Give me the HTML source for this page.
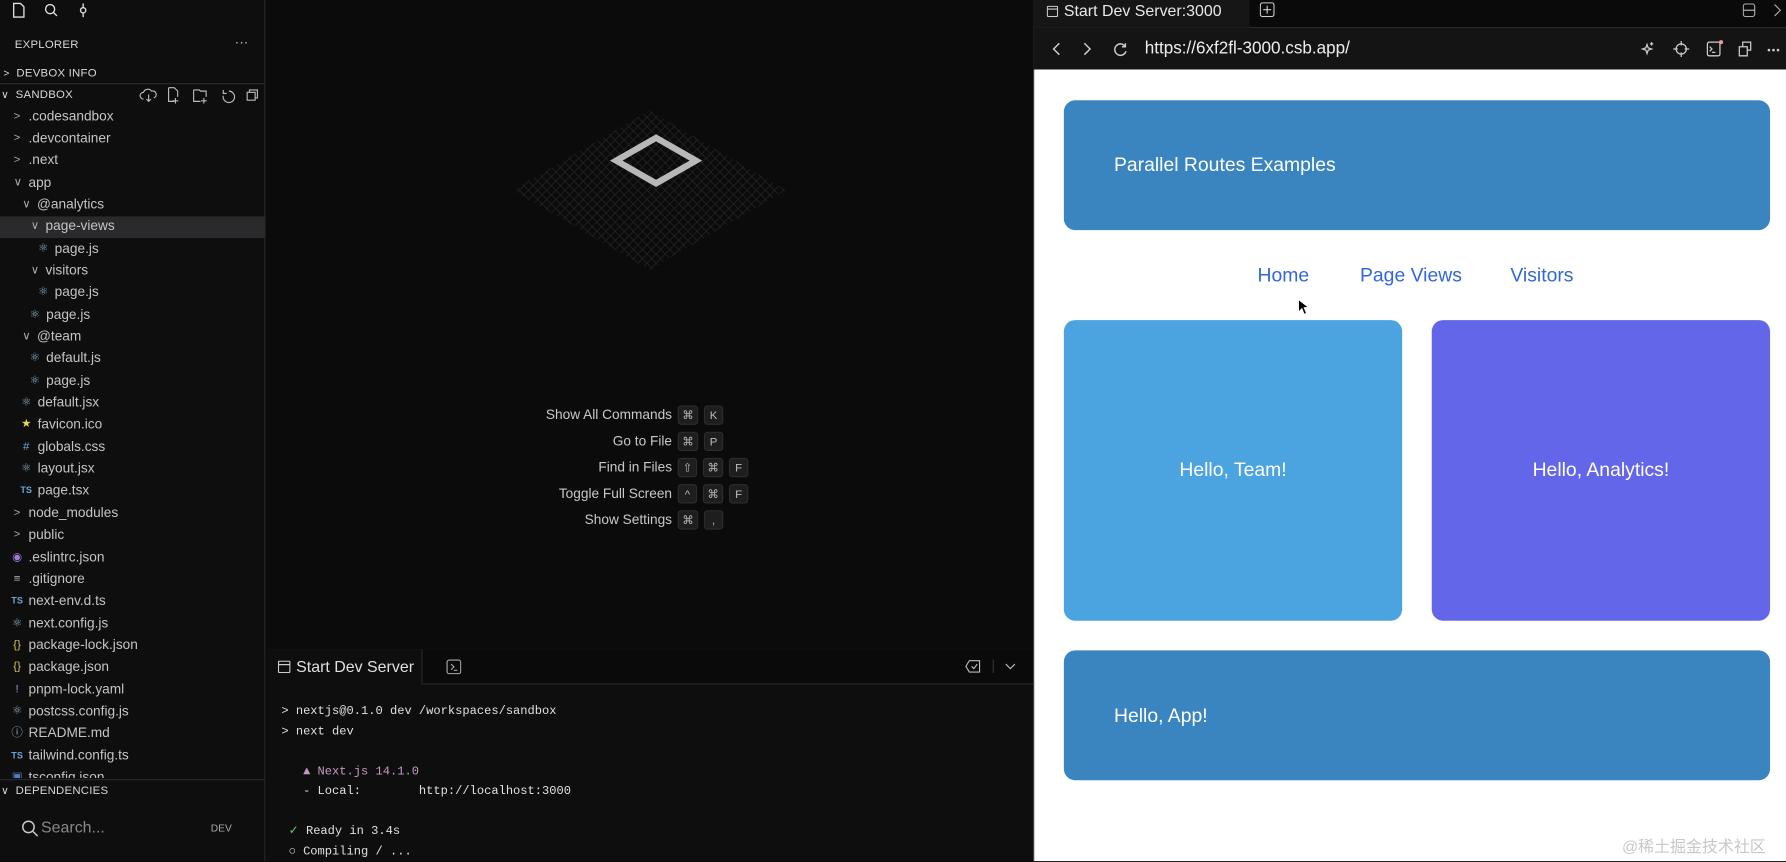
<!DOCTYPE html>
<html><head><meta charset="utf-8"><style>
*{margin:0;padding:0;box-sizing:border-box}
html,body{width:1786px;height:861px;overflow:hidden;background:#0b0b0b}
#w{position:absolute;left:0;top:0;width:1568px;height:756px;transform:scale(1.13903);transform-origin:0 0;font-family:"Liberation Sans",sans-serif;color:#cfcfcf;background:#0b0b0b}
.a{position:absolute}
.side{left:0;top:0;width:233px;height:756px;background:#0e0e0e;border-right:1px solid #262626}
.row{position:absolute;left:0;width:233px;height:19.35px;font-size:12px;line-height:19px;color:#c4c4c4;white-space:nowrap}
.row .ch{position:absolute;top:0;font-size:10px;color:#aaa}
.row .ic{position:absolute;top:0;font-size:10px;width:12px;text-align:center}
.hd{font-size:10px;color:#d8d8d8;letter-spacing:.2px}
.kbd{display:inline-block;min-width:17px;height:17px;line-height:17px;font-size:10px;text-align:center;background:#1e1e1e;border:1px solid #2c2c2c;border-radius:3px;color:#bbb;margin-left:5px;padding:0 3px}
.cmd{position:absolute;left:400px;width:300px;height:20px;font-size:12px;color:#c8c8c8;line-height:18px}
.cmd span.l{display:inline-block;width:190px;text-align:right}
.mono{font-family:"Liberation Mono",monospace;font-size:10.6px;color:#e0e0e0}
svg{display:block}
</style></head><body><div id="w">

<div class="a side">
 <svg class="a" style="left:10px;top:2px" width="74" height="14" viewBox="0 0 74 14" fill="none" stroke="#ddd" stroke-width="1.2">
  <path d="M2 1h6l3 3v9H2z"/>
  <circle cx="34" cy="6" r="4"/><path d="M37 9l3 3"/>
  <circle cx="63" cy="7" r="2.3"/><path d="M63 1v3.7M63 9.3V13"/>
 </svg>
 <div class="a hd" style="left:13px;top:34px">EXPLORER</div>
 <div class="a" style="left:206px;top:30px;color:#bbb;font-size:12px">···</div>
 <div class="a hd" style="left:3px;top:59px"><span style="font-size:9px">&gt;</span>&nbsp; DEVBOX INFO</div>
 <div class="a" style="left:0;top:73px;width:233px;border-top:1px solid #2a2a2a"></div>
 <div class="a hd" style="left:1px;top:78px"><span style="font-size:9px">∨</span>&nbsp; SANDBOX</div>
 <svg class="a" style="left:122px;top:76px" width="106" height="15" viewBox="0 0 106 15" fill="none" stroke="#bbb" stroke-width="1">
  <path d="M4 11a3 3 0 010-6 4 4 0 017-1 3 3 0 012 6M8.5 7v6M6.5 11l2 2 2-2"/>
  <path d="M26 1h5l3 3v5M26 1v12h5M32 10v5M29.5 12.5h5"/>
  <path d="M48 3h5l1 1h5v5M48 3v10h6M57 10v5M54.5 12.5h5"/>
  <path d="M79 4a5 5 0 11-5 4M74 3v3h3"/>
  <path d="M95 5h7v7h-7zM97 5V3h7v7h-2"/>
 </svg>
 <div class="a" style="left:0;top:190px;width:233px;height:19px;background:#2a2a2c"></div>
 <div id="tree"></div>
 <div class="a" style="left:0;top:684px;width:233px;border-top:1px solid #2a2a2a"></div>
 <div class="a hd" style="left:1px;top:689px"><span style="font-size:9px">∨</span>&nbsp; DEPENDENCIES</div>
 <svg class="a" style="left:18px;top:719px" width="16" height="16" viewBox="0 0 16 16" fill="none" stroke="#ccc" stroke-width="1.3"><circle cx="7" cy="7" r="5"/><path d="M11 11l4 4"/></svg>
 <div class="a" style="left:36px;top:718px;font-size:14px;color:#888">Search...</div>
 <div class="a" style="left:185px;top:722px;font-size:9px;color:#aaa">DEV</div>
</div>

<svg class="a" style="left:448px;top:95px" width="244" height="144" viewBox="0 0 244 144">
 <defs><pattern id="g" width="8" height="8" patternUnits="userSpaceOnUse"><path d="M0 0L8 8M8 0L0 8" stroke="#262626" stroke-width=".6"/></pattern>
 <clipPath id="c"><path d="M122 2L242 72 122 142 2 72z"/></clipPath></defs>
 <rect width="244" height="144" fill="url(#g)" clip-path="url(#c)"/>
 <path d="M128 26L163 46 128 66 93 46z" fill="none" stroke="#b8b8b8" stroke-width="5.5"/>
</svg>
<div class="cmd" style="top:355px"><span class="l">Show All Commands</span><span class="kbd">⌘</span><span class="kbd">K</span></div>
<div class="cmd" style="top:378px"><span class="l">Go to File</span><span class="kbd">⌘</span><span class="kbd">P</span></div>
<div class="cmd" style="top:401px"><span class="l">Find in Files</span><span class="kbd">⇧</span><span class="kbd">⌘</span><span class="kbd">F</span></div>
<div class="cmd" style="top:424px"><span class="l">Toggle Full Screen</span><span class="kbd">^</span><span class="kbd">⌘</span><span class="kbd">F</span></div>
<div class="cmd" style="top:447px"><span class="l">Show Settings</span><span class="kbd">⌘</span><span class="kbd">,</span></div>

<div class="a" style="left:234px;top:570px;width:673px;height:186px;background:#0e0e0e;border-top:1px solid #2a2a2a"></div>
<div class="a" style="left:234px;top:570px;width:137px;height:31px;border-right:1px solid #2a2a2a;background:#0e0e0e"></div>
<div class="a" style="left:371px;top:570px;width:536px;height:31px;background:#0a0a0a;border-bottom:1px solid #2a2a2a"></div>
<svg class="a" style="left:244px;top:580px" width="11" height="11" viewBox="0 0 11 11" fill="none" stroke="#ccc"><rect x=".5" y=".5" width="10" height="10" rx="1"/><path d="M.5 3.5h10"/></svg>
<div class="a" style="left:260px;top:577px;font-size:14px;color:#e0e0e0">Start Dev Server</div>
<svg class="a" style="left:392px;top:579px" width="13" height="13" viewBox="0 0 13 13" fill="none" stroke="#aaa"><rect x=".5" y=".5" width="12" height="12" rx="2"/><path d="M4 4l2.5 2.5L4 9M6.5 9.5h3"/></svg>
<svg class="a" style="left:847px;top:578px" width="50" height="14" viewBox="0 0 50 14" fill="none" stroke="#bbb"><path d="M4 2h9v10H4L1 7z"/><path d="M6 7l2 2 3-4"/><path d="M25 1v12" stroke="#333"/><path d="M36 5l4 4 4-4"/></svg>
<div class="a mono" style="left:247px;top:617px;line-height:17.5px;white-space:pre">&gt; nextjs@0.1.0 dev /workspaces/sandbox
&gt; next dev

   <span style="color:#c59ac2">▲ Next.js 14.1.0</span>
   - Local:        http://localhost:3000

 <span style="color:#6cc77a">✓</span> Ready in 3.4s
 ○ Compiling / ...</div>

<div class="a" style="left:907px;top:0;width:661px;height:756px;background:#fff;border-left:1px solid #333"></div>
<div class="a" style="left:907px;top:0;width:661px;height:24px;background:#0a0a0a"></div>
<div class="a" style="left:907px;top:0;width:190px;height:24px;background:#161616"></div>
<svg class="a" style="left:919px;top:5px" width="10" height="10" viewBox="0 0 10 10" fill="none" stroke="#ccc"><rect x=".5" y=".5" width="9" height="9" rx="1"/><path d="M.5 3h9"/></svg>
<div class="a" style="left:934px;top:1px;font-size:14px;color:#e8e8e8">Start Dev Server:3000</div>
<svg class="a" style="left:1106px;top:2px" width="13" height="13" viewBox="0 0 13 13" fill="none" stroke="#ccc"><rect x=".5" y=".5" width="12" height="12" rx="2"/><path d="M6.5 3v7M3 6.5h7"/></svg>
<svg class="a" style="left:1530px;top:3px" width="38" height="12" viewBox="0 0 38 12" fill="none" stroke="#aaa"><rect x=".5" y=".5" width="10" height="11" rx="2"/><path d="M.5 6h10M28 1l5 5-5 5"/></svg>
<div class="a" style="left:907px;top:24px;width:661px;height:37px;background:#141414"></div>
<svg class="a" style="left:922px;top:35px" width="70" height="16" viewBox="0 0 70 16" fill="none" stroke="#ccc" stroke-width="1.3"><path d="M8 3L3 8l5 5M30 3l5 5-5 5"/><path d="M66 6a5 5 0 10.5 4M66 3v3h-3"/></svg>
<div class="a" style="left:1005px;top:34px;font-size:15px;color:#eee">https://6xf2fl-3000.csb.app/</div>
<svg class="a" style="left:1440px;top:35px" width="128" height="16" viewBox="0 0 128 16" fill="none" stroke="#ccc" stroke-width="1.1">
 <path d="M6 4l1 3 3 1-3 1-1 3-1-3-3-1 3-1zM10 2v3M8.5 3.5h3"/>
 <circle cx="36" cy="8" r="4.5"/><path d="M36 1v4M36 11v4M29 8h4M39 8h4"/>
 <rect x="59" y="2" width="11" height="12" rx="1.5"/><path d="M61 6l2 2-2 2M63 11h3"/><circle cx="71" cy="2" r="1.8" fill="#e99" stroke="none"/>
 <path d="M87 6h7v8h-7zM90 6V2h7v7h-3"/>
 <circle cx="113" cy="9" r=".6" fill="#ccc"/><circle cx="117" cy="9" r=".6" fill="#ccc"/><circle cx="121" cy="9" r=".6" fill="#ccc"/>
</svg>

<div class="a" style="left:934px;top:88px;width:620px;height:114px;background:#3a85c0;border-radius:10px"></div>
<div class="a" style="left:978px;top:135px;font-size:17px;color:#fff">Parallel Routes Examples</div>
<div class="a" style="left:1104px;top:232px;font-size:17px;color:#3367d6">Home</div>
<div class="a" style="left:1194px;top:232px;font-size:17px;color:#3367d6">Page Views</div>
<div class="a" style="left:1326px;top:232px;font-size:17px;color:#3367d6">Visitors</div>
<svg class="a" style="left:1139px;top:262px" width="10" height="15" viewBox="0 0 10 15"><path d="M1 1v11l3-3 2 5 2-1-2-5h4z" fill="#000" stroke="#fff" stroke-width=".8"/></svg>
<div class="a" style="left:934px;top:281px;width:297px;height:264px;background:#4ba3e0;border-radius:10px"></div>
<div class="a" style="left:934px;top:403px;width:297px;text-align:center;font-size:17px;color:#fff">Hello, Team!</div>
<div class="a" style="left:1257px;top:281px;width:297px;height:264px;background:#6366e8;border-radius:10px"></div>
<div class="a" style="left:1257px;top:403px;width:297px;text-align:center;font-size:17px;color:#fff">Hello, Analytics!</div>
<div class="a" style="left:934px;top:571px;width:620px;height:114px;background:#3a85c0;border-radius:10px"></div>
<div class="a" style="left:978px;top:619px;font-size:17px;color:#fff">Hello, App!</div>
<div class="a" style="left:1424px;top:733px;font-size:14px;color:#c8c8c8;font-family:'Liberation Sans','Noto Sans CJK SC',sans-serif">@稀土掘金技术社区</div>

<script>
var R=[[0,'c','.codesandbox'],[0,'c','.devcontainer'],[0,'c','.next'],[0,'o','app'],[1,'o','@analytics'],[2,'o','page-views'],[3,'r','page.js'],[2,'o','visitors'],[3,'r','page.js'],[2,'r','page.js'],[1,'o','@team'],[2,'r','default.js'],[2,'r','page.js'],[1,'r','default.jsx'],[1,'s','favicon.ico'],[1,'h','globals.css'],[1,'r','layout.jsx'],[1,'t','page.tsx'],[0,'c','node_modules'],[0,'c','public'],[-1,'e','.eslintrc.json'],[-1,'g','.gitignore'],[-1,'t','next-env.d.ts'],[-1,'r','next.config.js'],[-1,'j','package-lock.json'],[-1,'j','package.json'],[-1,'y','pnpm-lock.yaml'],[-1,'r','postcss.config.js'],[-1,'i','README.md'],[-1,'t','tailwind.config.ts'],[-1,'x','tsconfig.json']];
var I={r:['⚛','#8fb3c9'],s:['★','#e6d75a'],h:['#','#6aa5d8'],t:['TS','#6aa5d8'],e:['◉','#9f7ad6'],g:['≡','#bbb'],j:['{}','#d6c35a'],y:['!','#a88ee0'],i:['ⓘ','#8fb3c9'],x:['▣','#4f7fc4']};
var h='';R.forEach(function(r,k){var y=92.5+k*19.35,l=r[0],x;
 if(r[1]=='c'||r[1]=='o'){x=12+l*7.5;h+='<div class="row" style="top:'+y+'px"><span class="ch" style="left:'+x+'px">'+(r[1]=='c'?'&gt;':'∨')+'</span><span style="position:absolute;left:'+(x+13)+'px">'+r[2]+'</span></div>';}
 else{x=l<0?9:17+(l-1)*7.5;var ic=I[r[1]];h+='<div class="row" style="top:'+y+'px;'+(k==30?'height:10px;overflow:hidden':'')+'"><span class="ic" style="left:'+x+'px;color:'+ic[1]+';'+(ic[0]=='TS'?'font-size:8px;font-weight:bold':'')+'">'+ic[0]+'</span><span style="position:absolute;left:'+(x+16)+'px">'+r[2]+'</span></div>';}
});document.getElementById('tree').innerHTML=h;
</script>
</div></body></html>
